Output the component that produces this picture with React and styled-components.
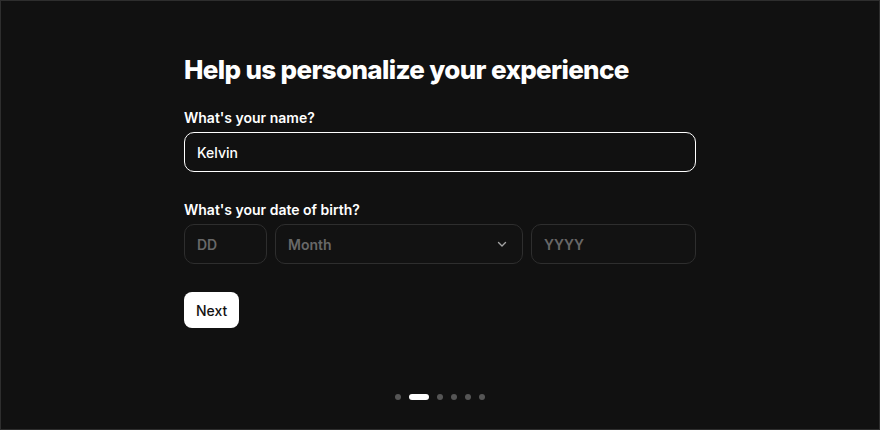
import styled, { createGlobalStyle } from "styled-components";

const GlobalStyle = createGlobalStyle`
  * {
    box-sizing: border-box;
  }
  body {
    margin: 0;
    background: #111111;
    font-family: Inter, "Noto Sans", sans-serif;
  }
`;

const steps = [false, true, false, false, false, false];

const ChevronIcon = () => (
  <svg width="12" height="12" viewBox="0 0 12 12" fill="none">
    <path
      d="M2.5 4.5L6 8L9.5 4.5"
      stroke="#a3a3a3"
      strokeWidth="1.4"
      strokeLinecap="round"
      strokeLinejoin="round"
    />
  </svg>
);

const App = () => {
  return (
    <>
      <GlobalStyle />
      <Page>
        <Main>
          <Form>
            <Title>Help us personalize your experience</Title>
            <Field>
              <Label>What's your name?</Label>
              <TextInput defaultValue="Kelvin" />
            </Field>
            <Field>
              <Label>What's your date of birth?</Label>
              <DateRow>
                <DateInput placeholder="DD" />
                <Select>
                  <span>Month</span>
                  <ChevronIcon />
                </Select>
                <DateInput placeholder="YYYY" />
              </DateRow>
            </Field>
            <NextButton>Next</NextButton>
          </Form>
        </Main>
        <Dots>
          {steps.map((active, i) => (
            <Dot key={i} $active={active} />
          ))}
        </Dots>
      </Page>
    </>
  );
};

export default App;

const Page = styled.div`
  width: 880px;
  height: 430px;
  display: flex;
  flex-direction: column;
  background: #111111;
  border: 1px solid #2e2e2e;
`;

const Main = styled.main`
  flex: 1;
  display: flex;
  justify-content: center;
  padding-top: 53px;
`;

const Form = styled.div`
  width: 512px;
  display: flex;
  flex-direction: column;
  align-items: flex-start;
`;

const Title = styled.h1`
  margin: 0 0 22px 0;
  font-size: 26px;
  line-height: 32px;
  font-weight: 800;
  letter-spacing: -0.65px;
  color: #ffffff;
`;

const Field = styled.div`
  width: 100%;
  display: flex;
  flex-direction: column;
  gap: 4px;
  margin-bottom: 28px;
`;

const Label = styled.label`
  font-size: 14px;
  line-height: 20px;
  font-weight: 600;
  color: #ffffff;
`;

const TextInput = styled.input`
  width: 100%;
  height: 40px;
  padding: 0 12px;
  border: 1px solid #ffffff;
  border-radius: 10px;
  background: #111111;
  color: #ffffff;
  font-family: Inter, sans-serif;
  font-size: 14px;
  font-weight: 500;
  outline: none;
`;

const DateRow = styled.div`
  display: grid;
  grid-template-columns: 83px 248px 1fr;
  gap: 8px;
`;

const DateInput = styled.input`
  height: 40px;
  padding: 0 12px;
  border: 1px solid #2e2e2e;
  border-radius: 10px;
  background: #121212;
  color: #ffffff;
  font-family: Inter, sans-serif;
  font-size: 14px;
  font-weight: 600;
  outline: none;
  min-width: 0;

  &::placeholder {
    color: #686868;
  }
`;

const Select = styled.div`
  height: 40px;
  padding: 0 14px 0 12px;
  border: 1px solid #2e2e2e;
  border-radius: 10px;
  background: #121212;
  display: flex;
  align-items: center;
  justify-content: space-between;
  font-size: 14px;
  font-weight: 600;
  color: #686868;
`;

const NextButton = styled.button`
  height: 36px;
  padding: 0 12px;
  border: none;
  border-radius: 8px;
  background: #ffffff;
  color: #111111;
  font-family: Inter, sans-serif;
  font-size: 14px;
  font-weight: 500;
`;

const Dots = styled.div`
  display: flex;
  justify-content: center;
  align-items: center;
  gap: 8px;
  padding-bottom: 29px;
`;

const Dot = styled.span`
  width: ${(p) => (p.$active ? "20px" : "6px")};
  height: 6px;
  border-radius: 3px;
  background: ${(p) => (p.$active ? "#ffffff" : "#555555")};
`;
